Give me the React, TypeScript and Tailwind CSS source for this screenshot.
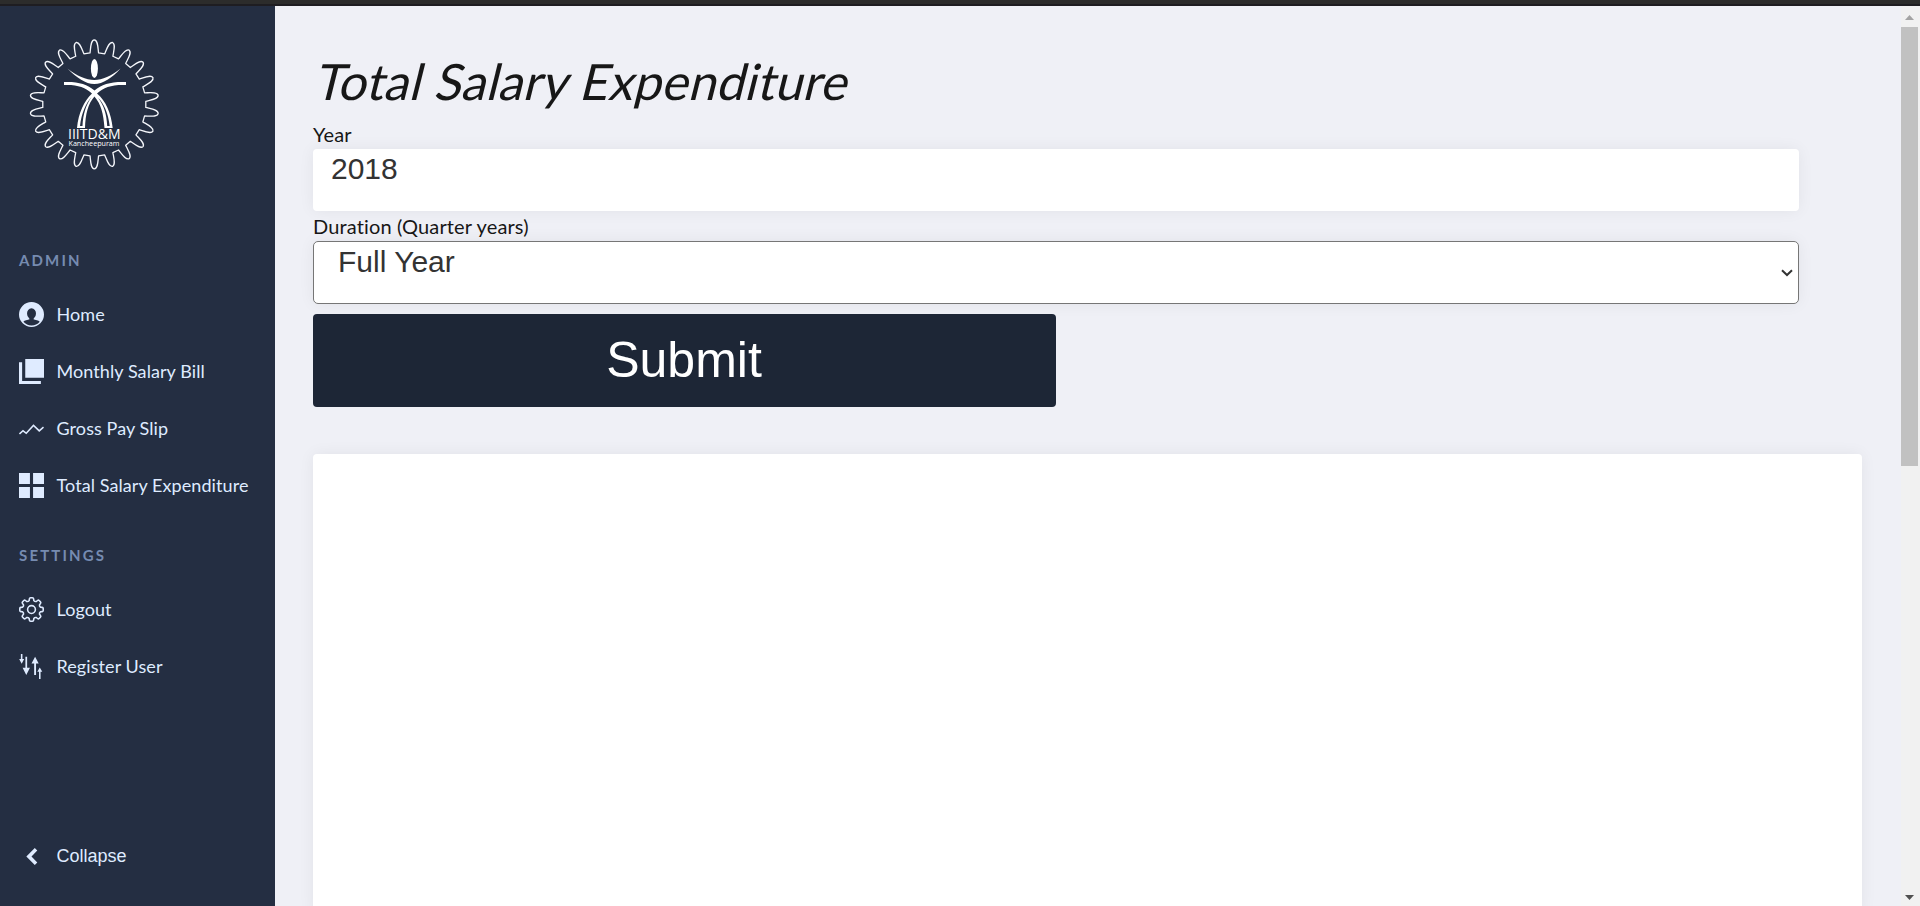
import React from "react";

const TEETH = 22;

function emblemRing() {
  const cx = 94.3;
  const cy = 104.4;
  const at = (r: number, a: number) =>
    `${(cx + r * Math.sin(a)).toFixed(2)} ${(cy - r * Math.cos(a)).toFixed(2)}`;
  const step = (Math.PI * 2) / TEETH;
  let d = "";
  for (let i = 0; i < TEETH; i++) {
    const a = i * step;
    d += `${i === 0 ? "M" : "L"}${at(51.6, a - step * 0.29)}`;
    d += `C${at(57, a - step * 0.22)} ${at(64.2, a - step * 0.2)} ${at(64.5, a)}`;
    d += `C${at(64.2, a + step * 0.2)} ${at(57, a + step * 0.22)} ${at(51.6, a + step * 0.29)}`;
  }
  return d + "Z";
}

function cogPath() {
  let d = "";
  const pt = (i: number, x: number, y: number) => {
    const a = (i * Math.PI) / 4;
    const px = 8 + x * Math.cos(a) - y * Math.sin(a);
    const py = 8 + x * Math.sin(a) + y * Math.cos(a);
    return `${px.toFixed(2)} ${py.toFixed(2)}`;
  };
  for (let i = 0; i < 8; i++) {
    d += i === 0 ? `M${pt(i, -1.5, -5.7)}` : "";
    d += `L${pt(i, -1.35, -6.8)}Q${pt(i, -1.25, -7.5)} ${pt(i, -0.6, -7.5)}`;
    d += `L${pt(i, 0.6, -7.5)}Q${pt(i, 1.25, -7.5)} ${pt(i, 1.35, -6.8)}`;
    d += `L${pt(i, 1.5, -5.7)}Q${pt(i, 2.05, -4.95)} ${pt(i + 1, -1.5, -5.7)}`;
  }
  return d + "Z";
}

function Logo() {
  return (
    <svg viewBox="24 36 140 140" className="h-[140px] w-[140px]" fill="#fff">
      <path d={emblemRing()} fill="none" stroke="#f4f6fb" strokeWidth="1.3" strokeLinejoin="round" />
      <ellipse cx="94.4" cy="68.5" rx="3.5" ry="9.6" />
      <path d="M67.5 68.5C77 76 86 80 94.3 80S111 76 120.5 68.5C112 78 103 84 94.3 84S77 78 67.5 68.5Z" />
      <path d="M64 82C78 81.5 87 84 94.5 90.5C102 84 111 81.5 126 82V85C112 84.5 104 87 97 93.5C106 101 111 113 112.7 128H104.5C103.5 114 101 104 94.4 96.5C88 104 85.5 114 85 128H77C78.5 113 84 101 92 93.5C85 87 77 84.5 64 85Z" />
      <path d="M80 126C81.5 113 86 103 91.5 97C86 105 83 114 82.5 126ZM109.7 126C108.2 113 103.7 103 98.2 98C103.7 105 106.7 114 107.2 126Z" fill="#242e42" />
      <text x="68" y="139.3" textLength="52.5" lengthAdjust="spacingAndGlyphs" className="font-['Open_Sans',sans-serif] text-[14px]">IIITD&amp;M</text>
      <text x="68.5" y="145.9" textLength="51" lengthAdjust="spacingAndGlyphs" className="font-['Open_Sans',sans-serif] text-[7.5px]">Kancheepuram</text>
    </svg>
  );
}

function Icon({ children }: { children: React.ReactNode }) {
  return (
    <svg viewBox="0 0 16 16" className="h-[25px] w-[25px] shrink-0" fill="#dfebff">
      {children}
    </svg>
  );
}

function Item({ icon, label }: { icon: React.ReactNode; label: string }) {
  return (
    <a className="flex h-[57px] items-center gap-[12.5px] text-[18px] tracking-[0.08px] text-[#dfebff]">
      <Icon>{icon}</Icon>
      <span className="whitespace-nowrap">{label}</span>
    </a>
  );
}

const home = (
  <path d="M8,0a8,8,0,1,0,8,8A8,8,0,0,0,8,0ZM8,15a7,7,0,0,1-5.19-2.32,2.71,2.71,0,0,1,1.7-1,13.11,13.11,0,0,0,1.29-.28,2.32,2.32,0,0,0,.94-.34,1.17,1.17,0,0,0-.27-.7h0A3.61,3.61,0,0,1,5.15,7.49,3.18,3.18,0,0,1,8,4.07a3.18,3.18,0,0,1,2.86,3.42,3.6,3.6,0,0,1-1.32,2.88h0a1.13,1.13,0,0,0-.27.69,2.68,2.68,0,0,0,.93.31,10.81,10.81,0,0,0,1.28.23,2.63,2.63,0,0,1,1.78,1A7,7,0,0,1,8,15Z" />
);
const collection = <path d="M0 2V16H14V14H2V2ZM4 0H16V12H4Z" />;
const trend = (
  <polygon points="0.64 11.85 -0.02 11.1 2.55 8.85 4.57 10.4 9.25 5.25 12.97 8.84 15.37 6.79 16.01 7.54 12.93 10.17 9.29 6.65 4.69 11.72 2.56 10.08 0.64 11.85" />
);
const grid = <path d="M0 0H7V7H0ZM9 0H16V7H9ZM0 9H7V16H0ZM9 9H16V16H9Z" />;
const gear = (
  <g fill="none" stroke="#dfebff" strokeWidth="1" strokeLinejoin="round">
    <circle cx="8" cy="8" r="2.5" />
    <path d={cogPath()} />
  </g>
);
const options = (
  <path d="M1.2 0H2.2V3.2H3.3L1.7 6.2L.1 3.2H1.2ZM4.1 1.7H5.2V8.8H7L4.65 13.4L2.3 8.8H4.1ZM10.3 1.7L12.6 6H10.9V13.4H9.7V6H8ZM13.3 8.7L14.9 11.3H13.8V16H12.8V11.3H11.7Z" />
);

export default function App() {
  return (
    <div className="flex h-[906px] w-[1920px] flex-col overflow-hidden bg-[#eff0f6] font-['Lato',sans-serif]">
      <div className="h-[6px] shrink-0 border-b-2 border-[#1e1d21] bg-[#2c2c2b]" />
      <div className="flex min-h-0 flex-1">
        <aside className="flex w-[275px] shrink-0 flex-col bg-[#242e42] pl-[19px]">
          <div className="-ml-[19px] pt-[30px] pl-[24px]">
            <Logo />
          </div>
          <h3 className="mt-[74px] text-[15px] leading-[20px] font-bold tracking-[2.15px] text-[#768bb0]">ADMIN</h3>
          <nav className="mt-[16px]">
            <Item icon={home} label="Home" />
            <Item icon={collection} label="Monthly Salary Bill" />
            <Item icon={trend} label="Gross Pay Slip" />
            <Item icon={grid} label="Total Salary Expenditure" />
          </nav>
          <h3 className="mt-[31px] text-[15px] leading-[20px] font-bold tracking-[2.15px] text-[#768bb0]">SETTINGS</h3>
          <nav className="mt-[16px]">
            <Item icon={gear} label="Logout" />
            <Item icon={options} label="Register User" />
          </nav>
          <button className="mt-auto mb-[21px] flex h-[57px] items-center gap-[12.5px] font-['Liberation_Sans',sans-serif] text-[18px] text-[#dfebff]">
            <Icon>
              <path d="M10.1 2.6L11.7 4.2L8 8L11.7 11.8L10.1 13.4L4.7 8Z" />
            </Icon>
            <span>Collapse</span>
          </button>
        </aside>
        <main className="flex min-w-0 flex-1 flex-col items-start overflow-hidden pl-[38px] text-[#171717]">
          <h1 className="mt-[40px] h-[70px] shrink-0 origin-[0_54px] -skew-x-14 text-[50px] leading-[70px] tracking-[0.2px] whitespace-nowrap">Total Salary Expenditure</h1>
          <label className="mt-[5px] h-[28px] shrink-0 text-[20px] leading-[26px] tracking-[0.14px]">Year</label>
          <div className="h-[62px] w-[1486px] shrink-0 rounded-[4px] bg-white pt-[3px] pl-[18px] font-['Liberation_Sans',sans-serif] text-[30px] leading-[34px] text-[#333] shadow-[0_0_16px_rgba(0,0,0,0.06)]">2018</div>
          <label className="mt-[2px] h-[28px] shrink-0 text-[20px] leading-[26px] tracking-[0.14px]">Duration (Quarter years)</label>
          <div className="flex h-[63px] w-[1486px] shrink-0 justify-between rounded-[5px] border border-[#767676] bg-white pr-[5px] pl-[24px] font-['Liberation_Sans',sans-serif] text-[30px] leading-[40px] text-[#333] shadow-[0_0_16px_rgba(0,0,0,0.06)]">
            <span>Full Year</span>
            <svg viewBox="0 0 12 8" className="mt-[27px] h-[8px] w-[12px]" fill="none" stroke="#333" strokeWidth="2">
              <path d="M1 1.2L6 6L11 1.2" />
            </svg>
          </div>
          <button className="mt-[10px] h-[93px] w-[743px] shrink-0 rounded-[4px] bg-[#1d2636] pr-px font-['Liberation_Sans',sans-serif] text-[50px] text-white">Submit</button>
          <section className="mt-[47px] h-[460px] w-[1549px] shrink-0 rounded-t-[4px] bg-white shadow-[0_0_16px_rgba(0,0,0,0.06)]" />
        </main>
        <div className="flex w-[19px] shrink-0 flex-col bg-[#f1f1f1]">
          <svg viewBox="0 0 19 21" className="h-[21px] w-[19px]" fill="#a3a3a3">
            <path d="M4 14L8.5 9L13 14Z" />
          </svg>
          <div className="h-[439px] w-[17px] bg-[#c1c1c1]" />
          <svg viewBox="0 0 19 21" className="mt-auto h-[21px] w-[19px]" fill="#505050">
            <path d="M4 10L8.5 15L13 10Z" />
          </svg>
        </div>
      </div>
    </div>
  );
}
